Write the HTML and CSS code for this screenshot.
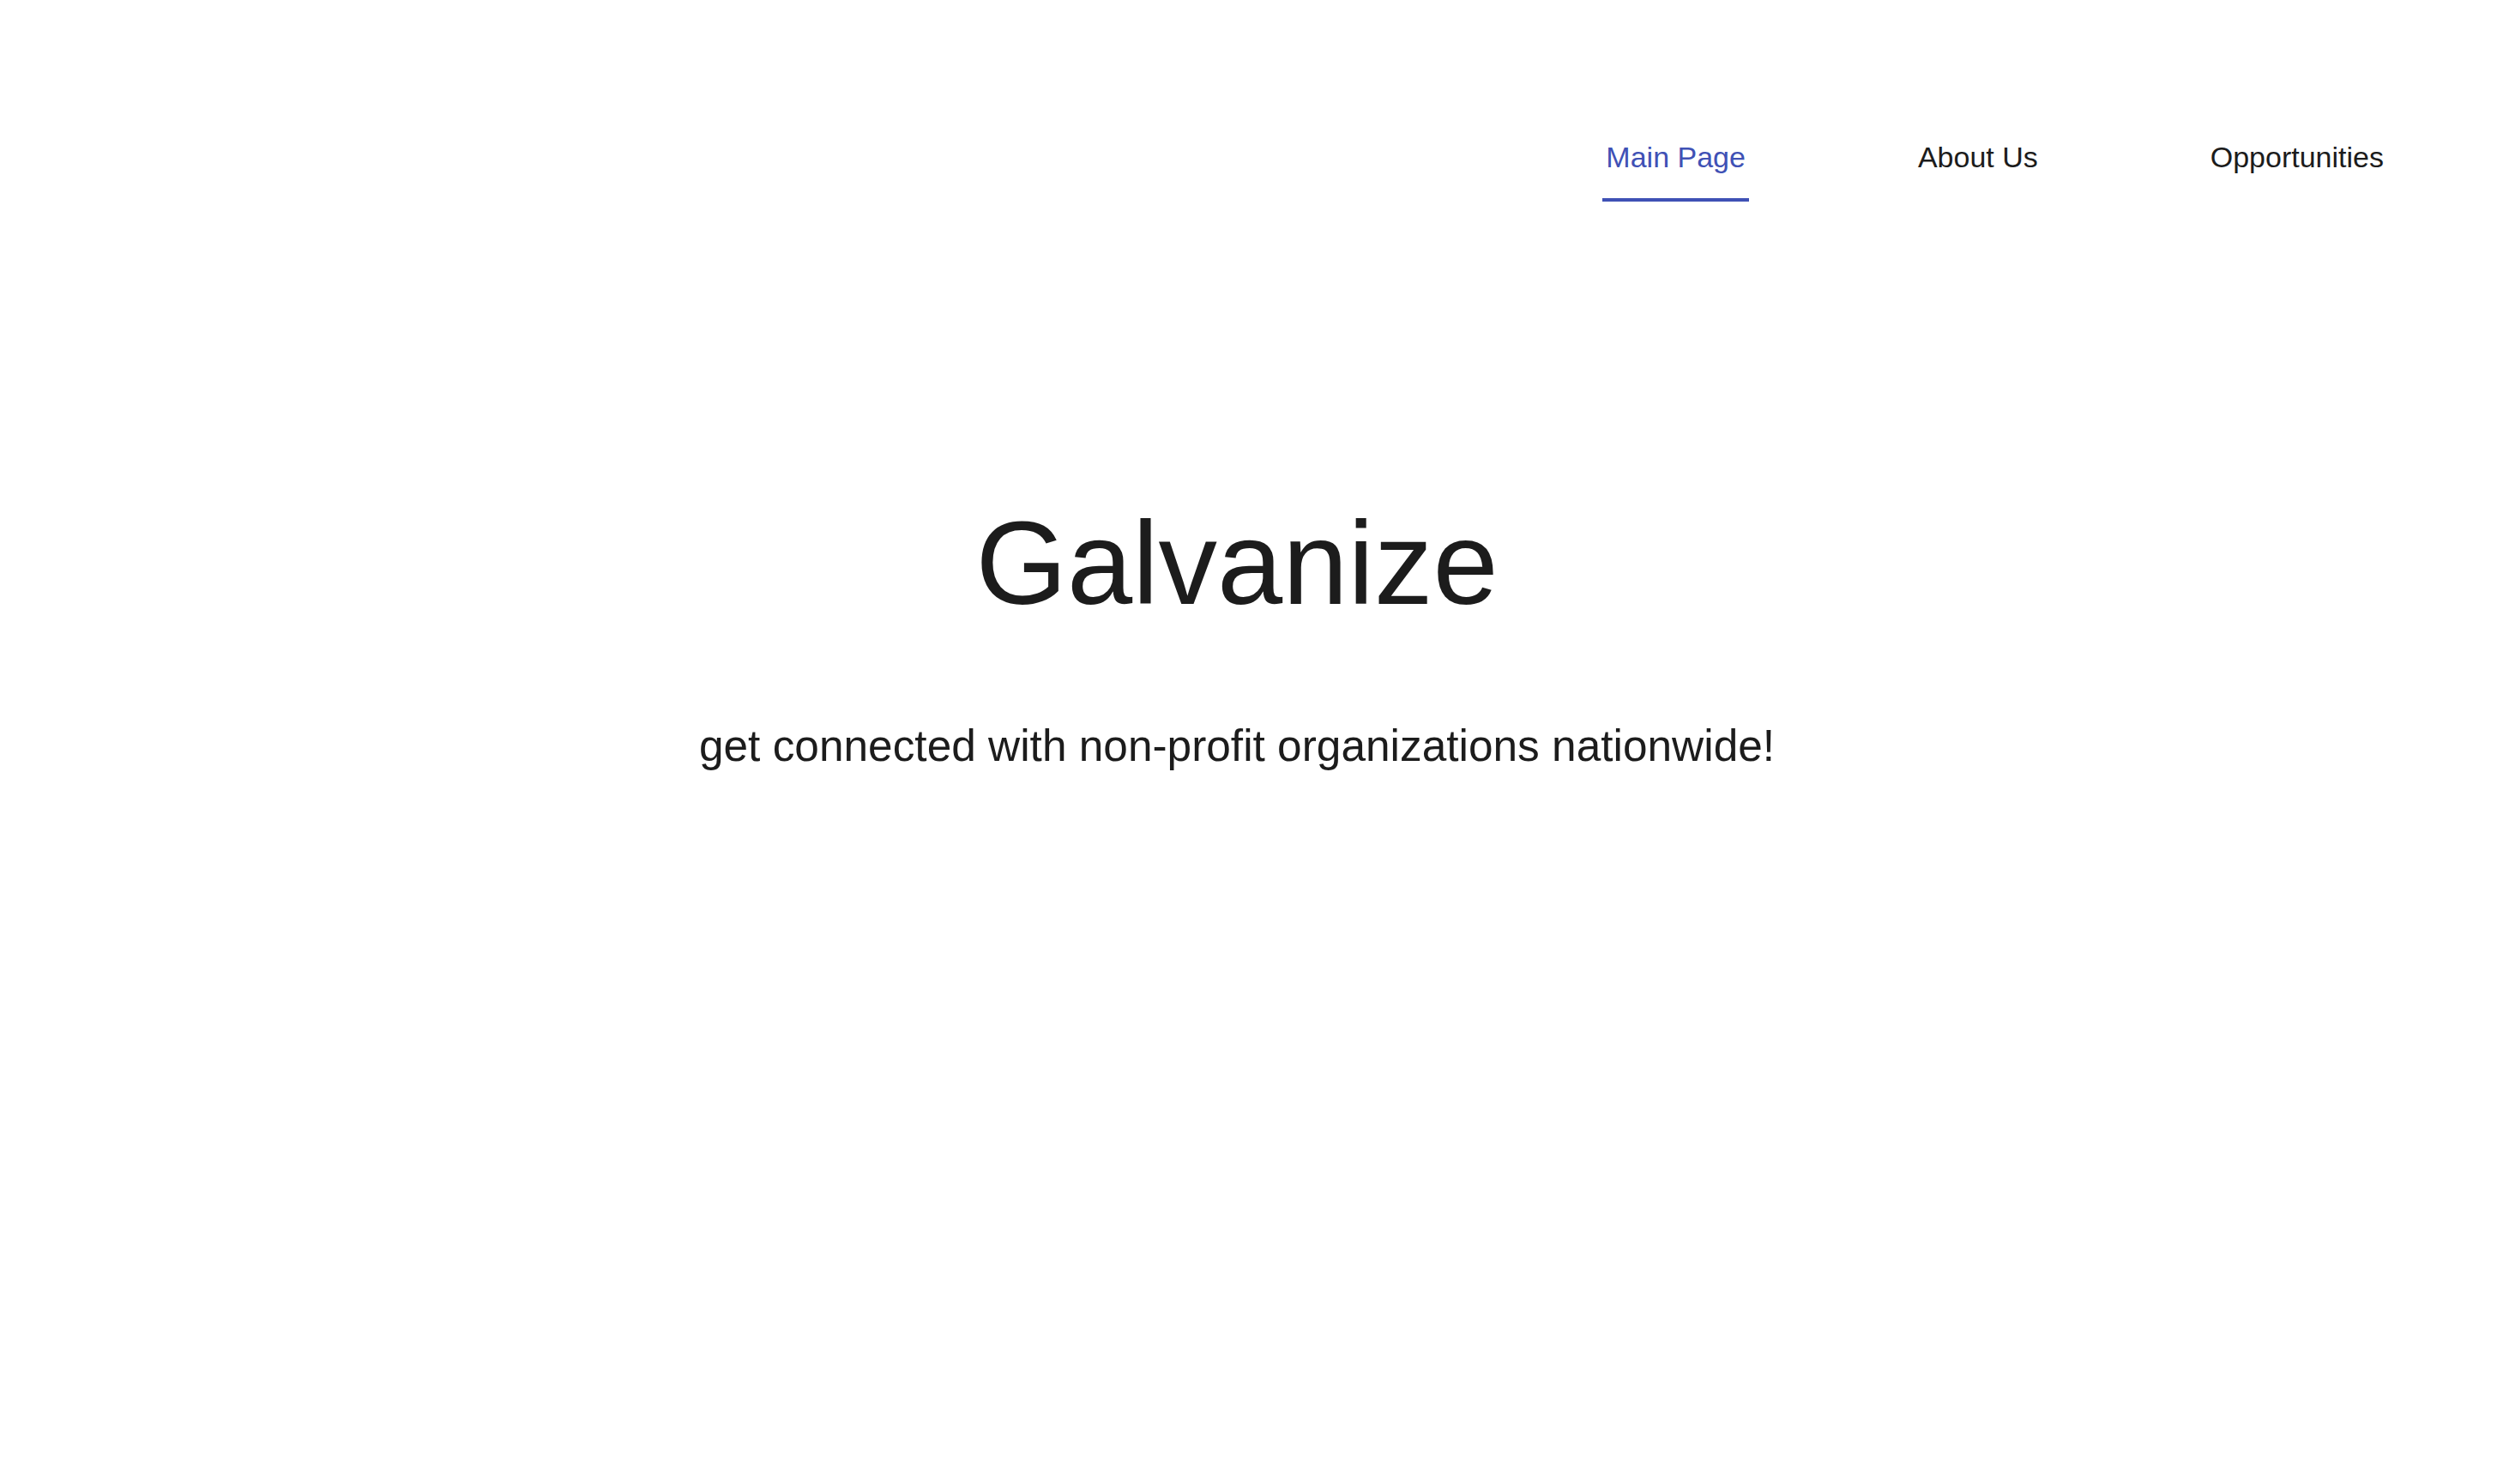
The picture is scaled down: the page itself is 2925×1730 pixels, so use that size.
FILE: index.html
```html
<!DOCTYPE html>
<html lang="en">
<head>
<meta charset="utf-8">
<title>Galvanize</title>
<link rel="stylesheet" href="styles.css">
</head>
<body>
<header class="site-header">
  <nav class="main-nav">
    <a class="nav-link active" href="#">Main Page</a>
    <a class="nav-link" href="#">About Us</a>
    <a class="nav-link" href="#">Opportunities</a>
  </nav>
</header>
<main class="hero">
  <h1 class="hero-title">Galvanize</h1>
  <p class="hero-subtitle">get connected with non-profit organizations nationwide!</p>
</main>
</body>
</html>
```

FILE: styles.css
```css
html, body {
  margin: 0;
  padding: 0;
  background: #ffffff;
}

body {
  font-family: "Liberation Sans", Arial, sans-serif;
  color: #1c1c1c;
}

.site-header {
  display: flex;
  justify-content: flex-end;
  padding: 164px 142px 0 0;
}

.main-nav {
  display: flex;
  gap: 193px;
}

.nav-link {
  font-size: 34px;
  line-height: 39px;
  padding: 0 4px 28px;
  border-bottom: 4px solid transparent;
  color: #1c1c1c;
  text-decoration: none;
}

.nav-link.active {
  color: #3f51b5;
  border-bottom-color: #3f51b5;
}

.hero {
  display: flex;
  flex-direction: column;
  align-items: center;
  padding-right: 41px;
  margin-top: 343px;
}

.hero-title {
  margin: 0;
  font-size: 137px;
  font-weight: 400;
  line-height: normal;
  color: #1c1c1c;
}

.hero-subtitle {
  margin: 104px 0 0;
  font-size: 51.4px;
  line-height: normal;
  color: #1c1c1c;
}
```
